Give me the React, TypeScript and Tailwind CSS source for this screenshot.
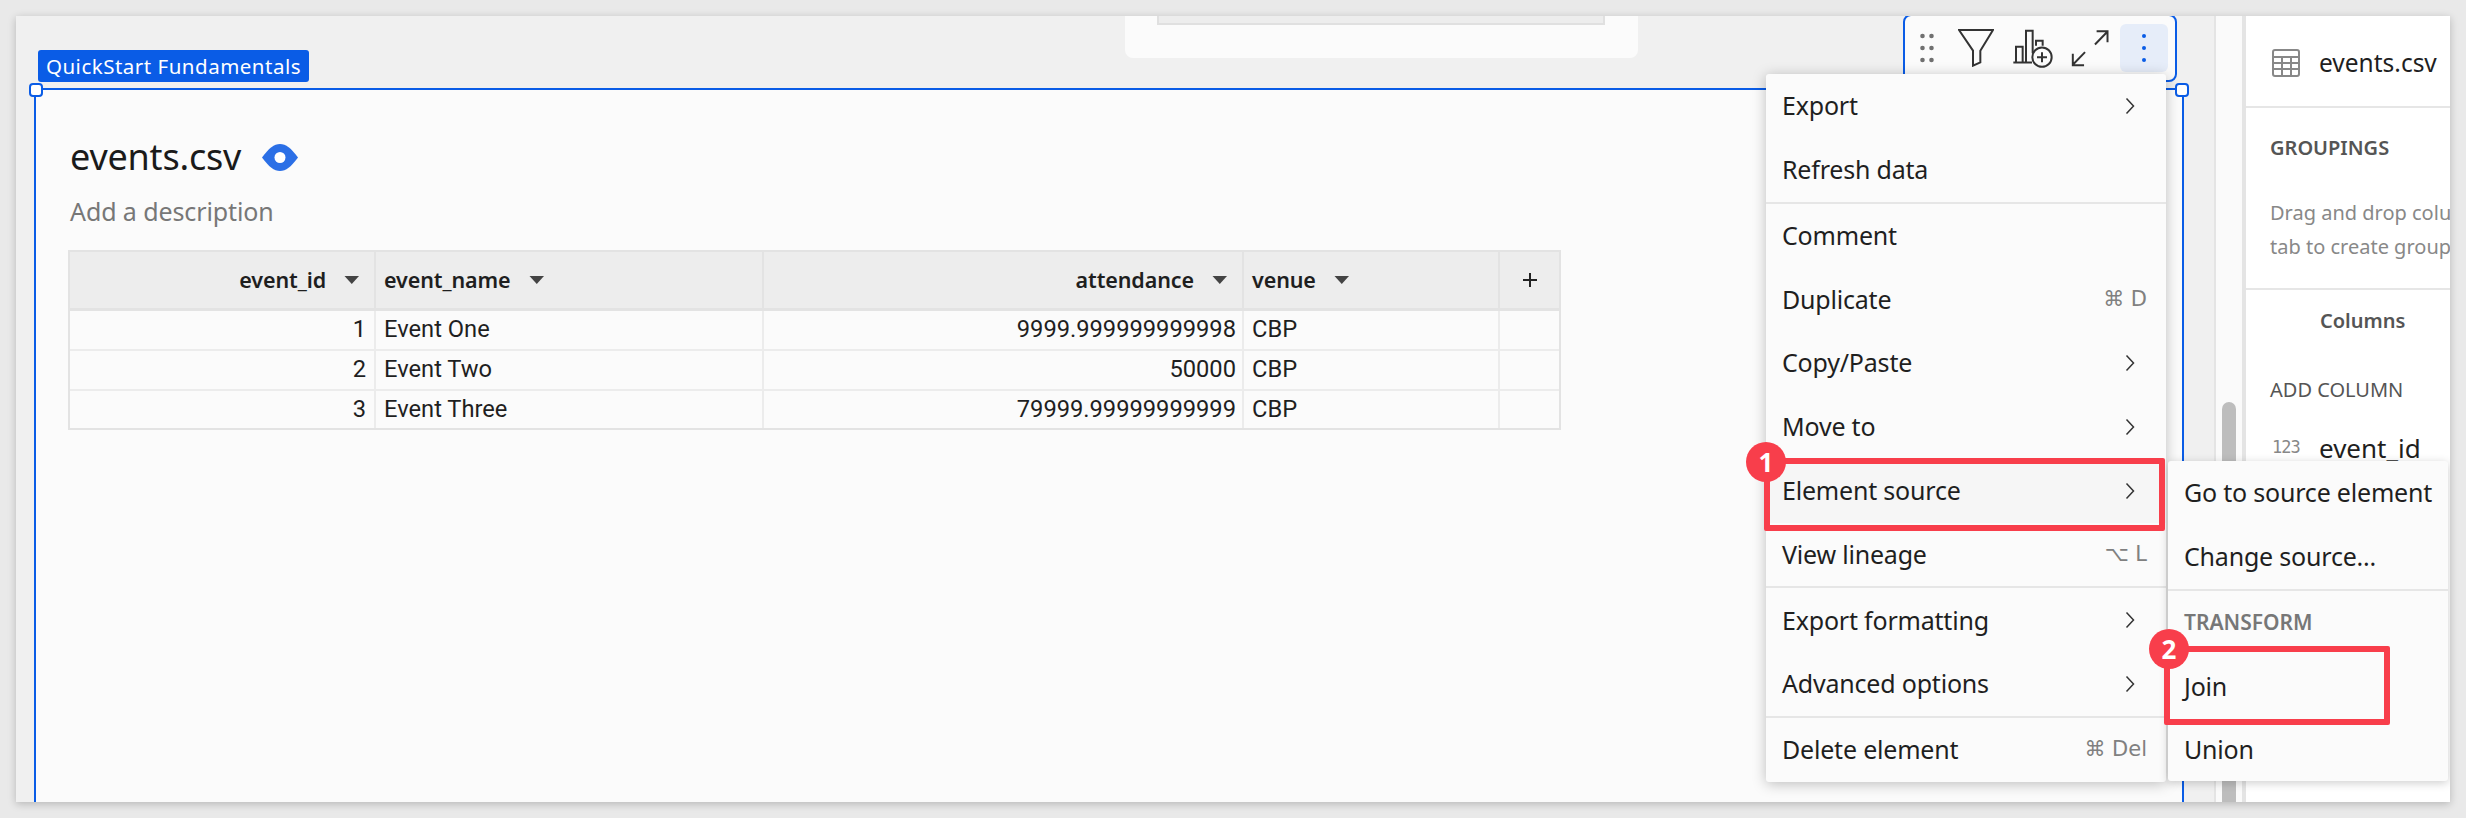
import React from "react";

const ui = "font-['Noto_Sans',sans-serif]";

function Chevron() {
  return (
    <svg width="10" height="18" viewBox="0 0 10 18" fill="none" className="shrink-0">
      <path d="M1.5 1.5 L8.5 9 L1.5 16.5" stroke="#333" strokeWidth="1.5" />
    </svg>
  );
}

function Caret() {
  return (
    <svg width="18" height="10" viewBox="0 0 18 10" className="shrink-0">
      <path d="M1.5 1 H16 L8.75 9 Z" fill="#444" />
    </svg>
  );
}

function Item({ label, chevron, shortcut, hover, h = "h-[63.8px]" }: { label: string; chevron?: boolean; shortcut?: string; hover?: boolean; h?: string }) {
  return (
    <div className={`flex items-center justify-between pl-[16px] ${h} ${hover ? "bg-[#f6f6f6]" : ""}`}>
      <span className="text-[25px] text-[#1f1f1f] tracking-[-0.2px] whitespace-nowrap">{label}</span>
      {chevron && <span className="mr-[31px] flex"><Chevron /></span>}
      {shortcut && <span className="mr-[19px] text-[21px] text-[#808080] whitespace-nowrap font-['DejaVu_Sans','Noto_Sans',sans-serif]">{shortcut}</span>}
    </div>
  );
}

function Divider() {
  return <div className="h-[2px] bg-[#e6e6e6]" />;
}

function Badge({ n, className }: { n: string; className: string }) {
  return (
    <div className={`absolute flex h-10 w-10 items-center justify-center rounded-full bg-[#f83e4b] text-[26px] font-bold text-white ${className}`}>
      {n}
    </div>
  );
}

const colCls = ["w-[306px]", "w-[388px]", "w-[480px]", "w-[256px]", "w-[59px]"];

function HeadCell({ i, label, right }: { i: number; label: string; right?: boolean }) {
  return (
    <div className={`${colCls[i]} flex items-center gap-[17px] border-r-2 border-[#e3e3e3] ${right ? "justify-end pr-[13px]" : "pl-[8px]"}`}>
      <span className="text-[21.5px] font-semibold text-[#1f1f1f] tracking-[-0.1px]">{label}</span>
      <Caret />
    </div>
  );
}

function Row({ a, b, c, d, last }: { a: string; b: string; c: string; d: string; last?: boolean }) {
  const cell = "flex items-center border-r-2 border-[#ececec]";
  return (
    <div className={`flex ${last ? "h-[37px]" : "h-[40px] border-b-2 border-[#ececec]"} font-['Roboto',sans-serif] text-[23.7px] text-[#1f1f1f]`}>
      <div className={`${colCls[0]} ${cell} justify-end pr-[8px]`}>{a}</div>
      <div className={`${colCls[1]} ${cell} pl-[8px]`}>{b}</div>
      <div className={`${colCls[2]} ${cell} justify-end pr-[6px]`}>{c}</div>
      <div className={`${colCls[3]} ${cell} pl-[8px]`}>{d}</div>
      <div className={`${colCls[4]}`} />
    </div>
  );
}

export default function App() {
  return (
    <div className={`h-[818px] w-[2466px] overflow-hidden bg-[#e9e9e9] pl-4 pt-4 ${ui}`}>
      <div className="relative flex h-[786px] w-[2434px] overflow-hidden shadow-[0_2px_8px_rgba(0,0,0,0.22)]">
        {/* canvas */}
        <div className="flex w-[2198px] flex-col bg-[#f0f0f0]">
          <div className="ml-[1109px] h-[42px] w-[513px] rounded-b-lg bg-[#fbfbfb]">
            <div className="ml-8 h-[9px] w-[448px] border-x-2 border-b-2 border-[#e0e0e0] bg-[#ededed]" />
          </div>
          <div className="relative ml-[18px] mt-[30px] w-[2150px] flex-1 border-x-2 border-t-2 border-[#0a5ce6] bg-[#fbfbfb] pl-[34px]">
            <div className="absolute left-[2px] -top-[40px] flex h-8 w-[271px] items-center justify-center rounded-[3px] bg-[#0a5ce6] text-[20.5px] tracking-[0.5px] text-white whitespace-nowrap">
              QuickStart Fundamentals
            </div>
            <div className="absolute -left-[7px] -top-[7px] h-[14px] w-[14px] rounded-[4px] border-2 border-[#0a5ce6] bg-white" />
            <div className="absolute -right-[7px] -top-[7px] h-[14px] w-[14px] rounded-[4px] border-2 border-[#0a5ce6] bg-white" />

            {/* toolbar */}
            <div className="absolute -top-[76px] left-[1867px] flex h-[68px] items-center rounded-lg border-2 border-[#0a5ce6] bg-[#fbfbfb] pl-[15px] pr-[7px]">
              <svg width="14" height="30" viewBox="0 0 14 30">
                <g fill="#707070">
                  <circle cx="2.5" cy="3" r="2.3" />
                  <circle cx="11.5" cy="3" r="2.3" />
                  <circle cx="2.5" cy="15" r="2.3" />
                  <circle cx="11.5" cy="15" r="2.3" />
                  <circle cx="2.5" cy="27" r="2.3" />
                  <circle cx="11.5" cy="27" r="2.3" />
                </g>
              </svg>
              <svg className="ml-[24px]" width="36" height="38" viewBox="0 0 108 114" fill="none">
                <path d="M3 3 H105 L67 65 V100 L45 110 V65 Z" stroke="#333" strokeWidth="6" />
              </svg>
              <svg className="ml-[18px]" width="42" height="39" viewBox="0 0 126 116" fill="none" stroke="#333" strokeWidth="6">
                <path d="M4 100 H60" />
                <path d="M12 100 V53 H32 V100" />
                <path d="M42 100 V5 H62 V72" />
                <path d="M72 50 V35 H92 V50" />
                <circle cx="90" cy="84" r="29" />
                <path d="M90 69 V99 M75 84 H105" />
              </svg>
              <svg className="ml-4" width="40" height="39" viewBox="0 0 120 118" fill="none" stroke="#333" strokeWidth="6">
                <path d="M75 47 L111 10 M80 7 H113 V40" />
                <path d="M45 70 L8 108 M8 75 V110 H42" />
              </svg>
              <div className="ml-[10px] flex h-12 w-12 flex-col items-center justify-center gap-[8px] rounded-md bg-[#e6edf9]">
                <span className="h-[4px] w-[4px] rounded-full bg-[#0a5ce6]" />
                <span className="h-[4px] w-[4px] rounded-full bg-[#0a5ce6]" />
                <span className="h-[4px] w-[4px] rounded-full bg-[#0a5ce6]" />
              </div>
            </div>

            <div className="mt-[47px] flex h-10 items-center gap-[21px]">
              <span className="text-[36px] leading-10 text-[#1a1a1a] tracking-[-0.2px]">events.csv</span>
              <svg width="36" height="27" viewBox="0 0 36 27">
                <path d="M0 13.5 C7 4 12 0 18 0 C24 0 29 4 36 13.5 C29 23 24 27 18 27 C12 27 7 23 0 13.5 Z" fill="#2b6fe6" />
                <circle cx="18" cy="13.5" r="5.5" fill="#fff" />
              </svg>
            </div>
            <div className="mt-[19px] text-[25px] leading-[30px] text-[#777] tracking-[-0.1px]">Add a description</div>

            <div className="-ml-[2px] mt-[24px] w-[1493px] border-2 border-[#e3e3e3]">
              <div className="flex h-[59px] border-b-[3px] border-[#e3e3e3] bg-[#ededed]">
                <HeadCell i={0} label="event_id" right />
                <HeadCell i={1} label="event_name" />
                <HeadCell i={2} label="attendance" right />
                <HeadCell i={3} label="venue" />
                <div className={`${colCls[4]} flex items-center justify-center`}>
                  <svg width="16" height="16" viewBox="0 0 16 16" fill="none" stroke="#222" strokeWidth="2">
                    <path d="M8 1 V15 M1 8 H15" />
                  </svg>
                </div>
              </div>
              <Row a="1" b="Event One" c="9999.999999999998" d="CBP" />
              <Row a="2" b="Event Two" c="50000" d="CBP" />
              <Row a="3" b="Event Three" c="79999.99999999999" d="CBP" last />
            </div>
          </div>
        </div>

        {/* scroll track */}
        <div className="flex w-8 flex-col border-l-[2px] border-r-[4px] border-[#e4e4e4] bg-[#fafafa] px-[6px]">
          <div className="mt-[386px] flex-1 rounded-t-lg bg-[#bdbdbd]" />
        </div>

        {/* right panel */}
        <div className="flex flex-1 flex-col overflow-hidden bg-white">
          <div className="flex h-[92px] shrink-0 items-center gap-[19px] border-b-2 border-[#e6e6e6] pl-[26px] pt-[4px]">
            <svg width="28" height="28" viewBox="0 0 28 28" fill="none" stroke="#888" strokeWidth="2">
              <rect x="1" y="1" width="26" height="26" rx="2" />
              <path d="M1 8 H27 M1 14 H27 M1 20 H27 M10 8 V27 M19 8 V27" />
            </svg>
            <span className="text-[24.5px] text-[#1f1f1f] whitespace-nowrap">events.csv</span>
          </div>
          <div className="h-[182px] shrink-0 border-b-2 border-[#e6e6e6] pl-6 whitespace-nowrap">
            <div className="mt-[25px] text-[20px] font-semibold leading-[30px] text-[#555]">GROUPINGS</div>
            <div className="mt-[33px] text-[20px] leading-[34px] text-[#888]">Drag and drop columns</div>
            <div className="text-[20px] leading-[34px] text-[#888]">tab to create groupings</div>
          </div>
          <div className="pl-[74px] pt-[17px] text-[20px] font-semibold leading-[28px] text-[#555]">Columns</div>
          <div className="mt-[41px] pl-6 text-[20px] leading-[28px] text-[#555]">ADD COLUMN</div>
          <div className="mt-[28px] flex items-center gap-[19px] pl-[26px]">
            <span className="w-[28px] font-['DejaVu_Sans_Mono',monospace] text-[17px] text-[#888] tracking-[-1px]">123</span>
            <span className="text-[26px] leading-[32px] text-[#1f1f1f]">event_id</span>
          </div>
        </div>

        {/* menu */}
        <div className="absolute left-[1750px] top-[58px] flex w-[400px] flex-col rounded-[3px] bg-[#fbfbfb] shadow-[0_2px_14px_rgba(0,0,0,0.25)]">
          <Item label="Export" chevron />
          <Item label="Refresh data" />
          <Divider />
          <Item label="Comment" />
          <Item label="Duplicate" shortcut="⌘ D" />
          <Item label="Copy/Paste" chevron />
          <Item label="Move to" chevron />
          <Item label="Element source" chevron hover />
          <Item label="View lineage" shortcut="⌥ L" />
          <Divider />
          <Item label="Export formatting" chevron />
          <Item label="Advanced options" chevron />
          <Divider />
          <Item label="Delete element" shortcut="⌘ Del" h="h-[64px]" />
        </div>

        {/* submenu */}
        <div className="absolute left-[2152px] top-[445px] flex w-[280px] flex-col rounded-[3px] bg-[#fbfbfb] shadow-[0_2px_10px_rgba(0,0,0,0.2)]">
          <Item label="Go to source element" />
          <Item label="Change source..." />
          <Divider />
          <div className="flex h-[64px] items-center pl-[16px] text-[21px] font-semibold text-[#777]">TRANSFORM</div>
          <Item label="Join" />
          <Item label="Union" h="h-[63px]" />
        </div>

        {/* annotations */}
        <div className="absolute left-[1748px] top-[442px] h-[73px] w-[401px] rounded-[2px] border-[6px] border-[#f83e4b]" />
        <Badge n="1" className="left-[1730px] top-[426px]" />
        <div className="absolute left-[2148px] top-[630px] h-[79px] w-[226px] rounded-[2px] border-[6px] border-[#f83e4b]" />
        <Badge n="2" className="left-[2133px] top-[613px]" />
      </div>
    </div>
  );
}
